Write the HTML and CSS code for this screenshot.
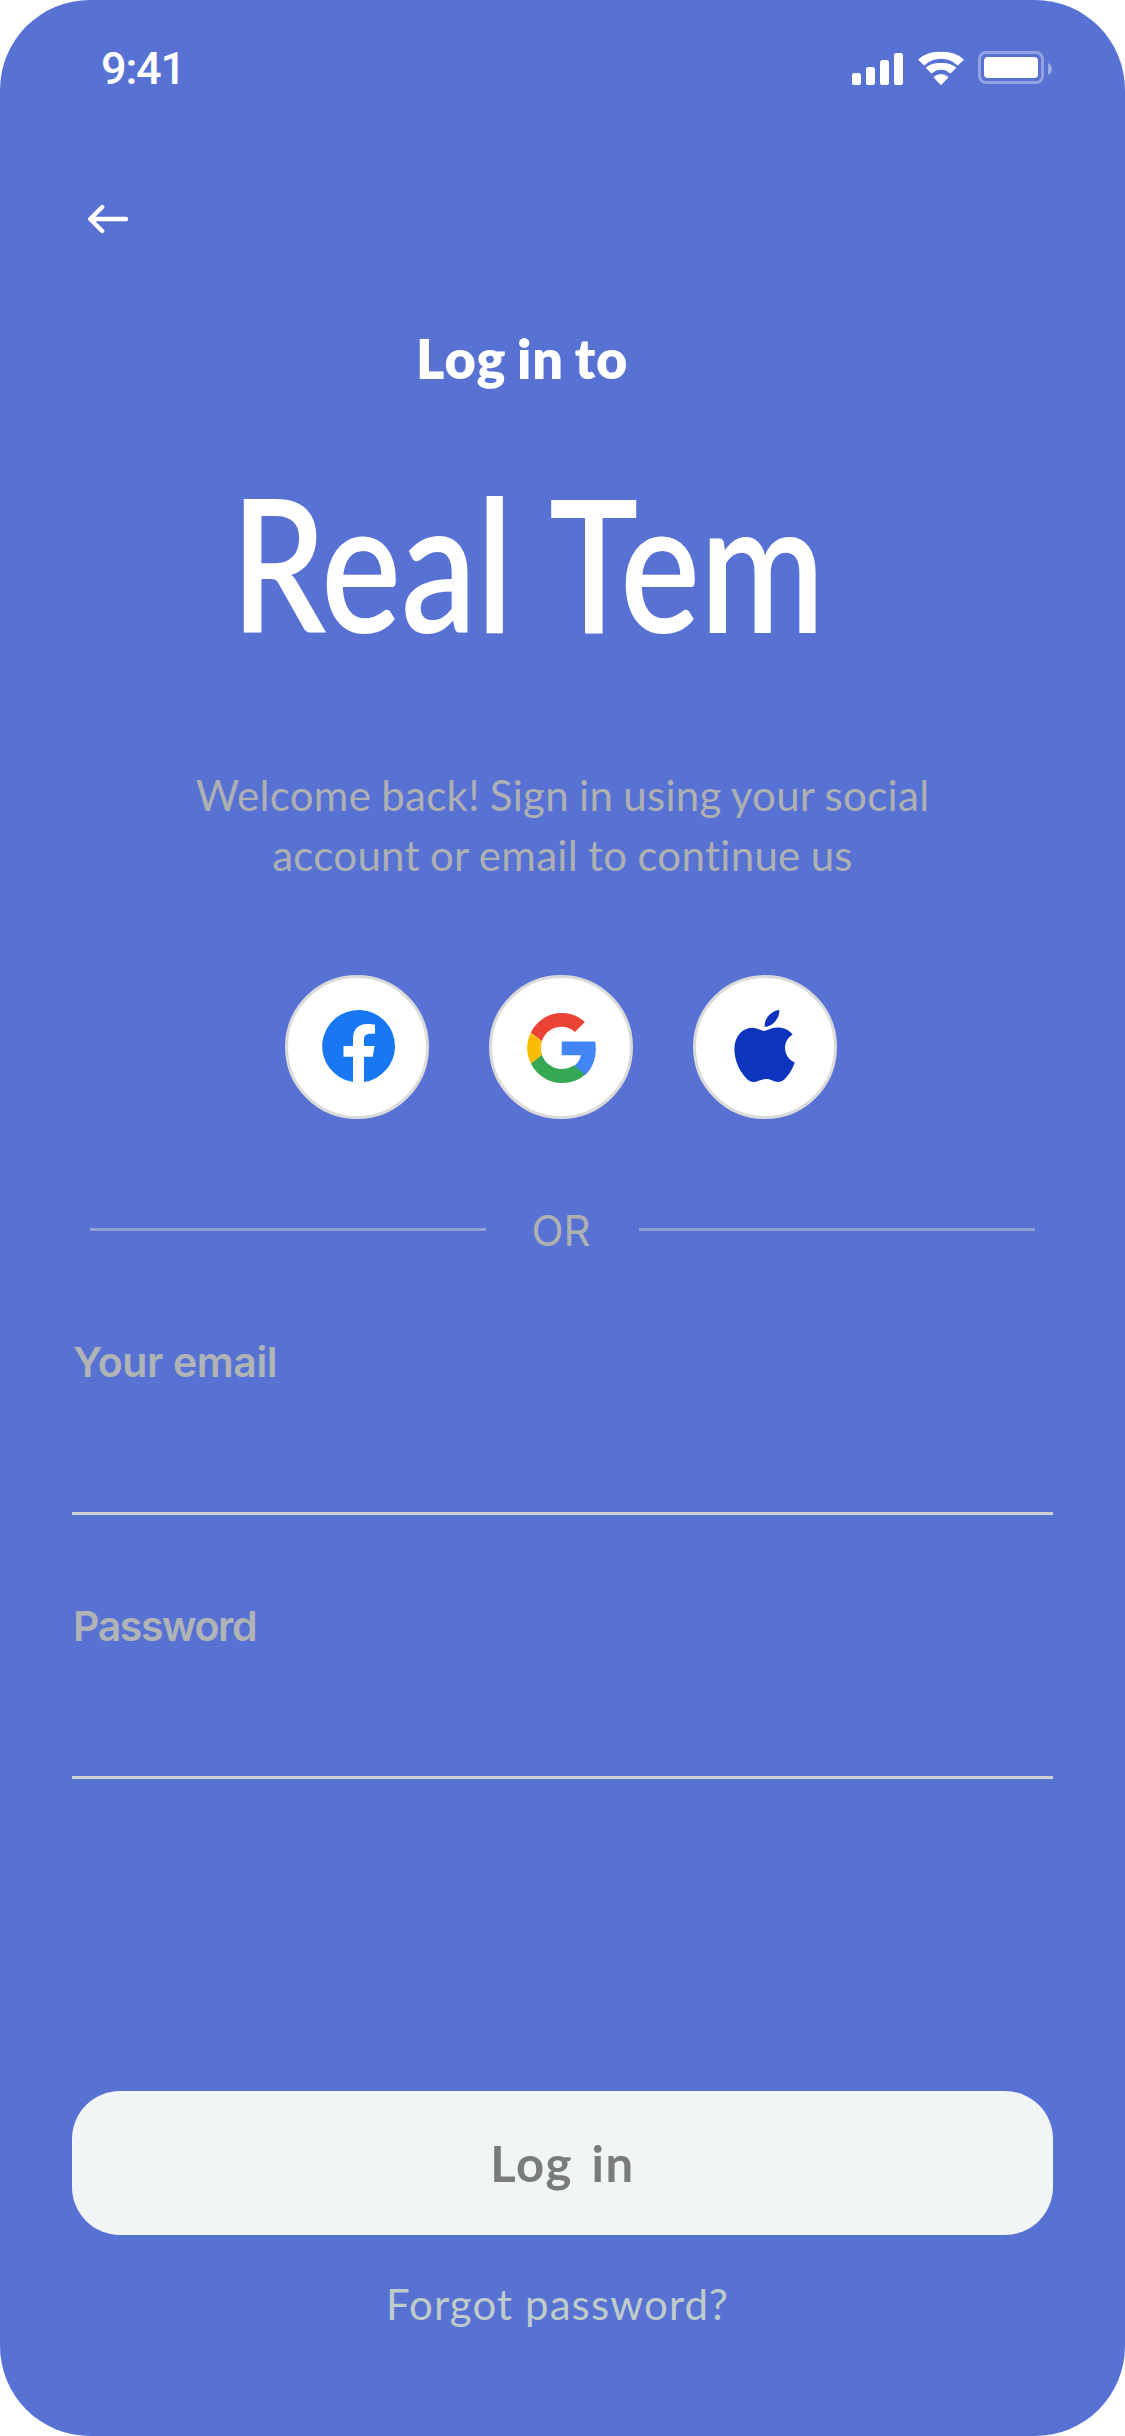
FILE: index.html
```html
<!DOCTYPE html>
<html lang="en">
<head>
<meta charset="utf-8">
<title>Log in to Real Tem</title>
<link rel="stylesheet" href="styles.css">
</head>
<body>
<main class="screen">
  <header class="status">
    <span class="time">9:41</span>
    <div class="status-icons">
      <svg width="51" height="34" viewBox="0 0 51 34" fill="#fff"><rect y="22" width="9" height="12" rx="2.6"/><rect x="14" y="16" width="9" height="18" rx="2.6"/><rect x="28" y="9" width="9" height="25" rx="2.6"/><rect x="42" y="2" width="9" height="32" rx="2.6"/></svg>
      <svg width="46" height="34" viewBox="0 0 46 34" fill="#fff"><path d="M23 7.800c6 0 11.600 2.200 16 6.200.4.4 1 .4 1.400 0l4.900-4.700c.5-.4.5-1 0-1.400A33 33 0 0 0 23 .9 33 33 0 0 0 .7 7.900c-.5.4-.5 1 0 1.400L5.600 14c.4.4 1 .4 1.400 0 4.400-4 10-6.200 16-6.200z"/><path d="M23 18.700c3.300 0 6.300 1.200 8.600 3.300.4.4 1 .4 1.400 0l4.600-4.500c.5-.4.5-1 0-1.400A21.500 21.500 0 0 0 23 12a21.500 21.500 0 0 0-14.600 4.100c-.5.4-.5 1 0 1.400L13 22c.4.4 1 .4 1.400 0 2.300-2.100 5.300-3.300 8.600-3.300z"/><path d="M29.900 27c.4-.4.4-1 0-1.400a10.700 10.700 0 0 0-13.800 0c-.4.4-.4 1 0 1.400l6.200 6.500c.4.4 1 .4 1.400 0z"/></svg>
      <svg width="75" height="34" viewBox="0 0 75 34"><rect x="1.500" y="1.500" width="63" height="30" rx="6.500" fill="none" stroke="#fff" stroke-width="3" opacity=".35"/><rect x="6" y="6" width="54" height="21" rx="4" fill="#fff"/><path d="M70 12c2.500 1 4 3.400 4 6s-1.500 5-4 6z" fill="#fff" opacity=".42"/></svg>
    </div>
  </header>

  <a class="back" href="#" aria-label="Back"><svg width="42" height="30" viewBox="0 0 42 30" fill="none" stroke="#fff" stroke-width="4.400" stroke-linecap="round" stroke-linejoin="round"><path d="M39 15H3.500M15.200 3L3.200 15l12 12"/></svg></a>

  <h1 class="title">Log in to</h1>
  <div class="brand">Real Tem</div>
  <p class="intro">Welcome back! Sign in using your social<br>account or email to continue us</p>

  <div class="socials">
    <a class="social" href="#" aria-label="Facebook"><svg width="73" height="72" viewBox="0 0 73 72"><path fill="#1877f2" d="M73 36.200A36.400 36.200 0 1 0 31 72V46.700h-9.500V36H31v-7.200C31 19.300 36.300 14 45 14c3 0 8 .6 8 .6v9.200h-4.900C43.600 23.800 42 26.500 42 29v7h10.500l-1.700 10.700H42V72A36.400 36.200 0 0 0 73 36.200z"/></svg></a>
    <a class="social" href="#" aria-label="Google"><svg width="69" height="70" viewBox="0 0 69 70"><path fill="#4285f4" d="M68.300 28.500H34.700v13.800h19.200c-.8 4.500-3.400 8.300-7.200 10.900v.9l11 8.500C64.900 56 68.800 46.800 68.800 36c0-2.600-.2-5.100-.5-7.500z"/><path fill="#34a853" d="M34.700 70c9.700 0 17.800-3.100 23.500-8.700l-11.500-8.700c-3.200 2.200-7.300 3.400-12 3.400-9.300 0-17.200-6.200-20-14.500L3.900 50.500C9.700 62.100 21.300 70 34.700 70z"/><path fill="#fbbc05" d="M15 42c-1.500-4.600-1.500-9.600 0-14L3.900 19.500c-5 10-5 21.200 0 31z"/><path fill="#ea4335" d="M34.700 13.800c5.100 0 9.800 1.900 13.200 5.300l10-10C51.900 3.400 43.900 0 34.700 0 21.300 0 9.700 7.800 3.900 19.500L15 28c2.600-8.300 10.400-14.200 19.700-14.200z"/></svg></a>
    <a class="social" href="#" aria-label="Apple"><svg width="61" height="72" viewBox="0 0 61 72" fill="#0c34bf"><path d="M58.600 24.500c-4.700 3-7.600 7.700-7.600 13.300 0 6.400 3.800 12.200 9.700 14.700-1.200 3.800-3 7.400-5.200 10.700-3.300 4.700-6.700 8.800-11.300 8.800-5 0-6.300-2.900-12.200-2.900C26.300 69.100 24 72 19.400 72c-4.700 0-7.900-4.300-11.700-9.500C3.100 55.600.6 47.500.4 39.200c0-14 9.100-21.400 18-21.400 4.800 0 8.700 3.100 11.700 3.100 2.900 0 7.300-3.300 12.800-3.300 6.100-.2 12 2.300 15.700 6.900zM41.500 11c2.400-2.900 3.800-6.500 3.900-10.200 0-.3 0-.6-.1-.8-4.100.4-7.900 2.400-10.600 5.500-2.500 2.800-4 6.300-4.100 10v1.200c3.700.6 8.200-2.200 10.900-5.700z"/></svg></a>
  </div>

  <div class="divider"><span class="or">OR</span></div>

  <form class="form">
    <div class="field">
      <label class="label" for="email">Your email</label>
      <input class="input" id="email" type="email">
    </div>
    <div class="field">
      <label class="label password" for="password">Password</label>
      <input class="input" id="password" type="password">
    </div>
    <button class="submit" type="button">Log in</button>
  </form>
  <a class="forgot" href="#">Forgot password?</a>
</main>
</body>
</html>
```
FILE: styles.css
```css
* {
  box-sizing: border-box;
}

body {
  margin: 0;
  background: #fff;
}

a {
  color: inherit;
  text-decoration: none;
}

svg {
  display: block;
}

.screen {
  display: flex;
  flex-direction: column;
  align-items: flex-start;
  width: 1125px;
  height: 2436px;
  overflow: hidden;
  border-radius: 90px;
  background: #5872d4;
  color: #fff;
  font-family: Lato, "Open Sans", sans-serif;
}

.status {
  display: flex;
  justify-content: space-between;
  width: 100%;
  height: 132px;
  padding: 51px 72px 0 101px;
}

.time {
  font: 500 45px/36px Roboto, sans-serif;
  letter-spacing: -1.2px;
}

.status-icons {
  display: flex;
  gap: 14.5px;
}

.back {
  margin: 72px 0 0 87px;
}

.title {
  margin: 90px 0 0 416px;
  font-size: 54px;
  font-weight: 800;
  line-height: 70px;
  letter-spacing: 1px;
  word-spacing: -3px;
}

.brand {
  margin: 67px 0 0 231px;
  font-size: 186px;
  font-weight: 600;
  line-height: 200px;
  word-spacing: 4px;
  white-space: nowrap;
  transform: scaleX(0.807);
  transform-origin: left;
}

.intro {
  width: 100%;
  margin: 104px 0 0;
  color: #aeb0b2;
  font-size: 42px;
  line-height: 60px;
  letter-spacing: 0.3px;
  word-spacing: -1px;
  text-align: center;
}

.socials {
  display: flex;
  gap: 60px;
  margin: 90px 0 0 285px;
}

.social {
  display: flex;
  align-items: center;
  justify-content: center;
  width: 144px;
  height: 144px;
  border: 3px solid #dadada;
  border-radius: 50%;
  background: #fff;
}

.social:first-child svg {
  margin: -3px 0 0 2px;
}

.social:nth-child(2) svg {
  margin: 1px 0 0 1px;
}

.social:last-child svg {
  margin: -3px 1px 0 0;
}

.divider {
  display: grid;
  grid-template-columns: 396px 1fr 396px;
  align-items: center;
  width: 945px;
  height: 60px;
  margin: 79px 0 0 90px;
  color: #afb1b1;
  font: 400 42px/60px Inter, sans-serif;
  text-align: center;
}

.divider::before,
.divider::after {
  height: 3px;
  background: #929fcf;
  content: "";
}

.or {
  padding: 3px 3px 0 0;
}

.form {
  width: 981px;
  margin: 74px 0 0 72px;
}

.field {
  display: flex;
  flex-direction: column;
  margin-bottom: 81px;
}

.label {
  padding-left: 1px;
  color: #b1b4b4;
  font: 600 41px/60px Inter, sans-serif;
  letter-spacing: -0.4px;
}

.password {
  letter-spacing: -1.4px;
}

.input {
  height: 123px;
  padding: 0;
  border: 0;
  border-bottom: 3px solid #cdd1d0;
  outline: 0;
  background: none;
  color: #fff;
  font: 400 41px Inter, sans-serif;
}

.submit {
  width: 100%;
  height: 144px;
  margin-top: 231px;
  padding: 0;
  border: 0;
  border-radius: 48px;
  background: #f2f5f6;
  color: #7a7c7b;
  font: 700 49px/60px Lato, sans-serif;
  letter-spacing: 1.6px;
  word-spacing: 5px;
}

.forgot {
  margin: 39px 0 0 386px;
  color: #bfccca;
  font-size: 42px;
  line-height: 60px;
  letter-spacing: 1.1px;
}
```
